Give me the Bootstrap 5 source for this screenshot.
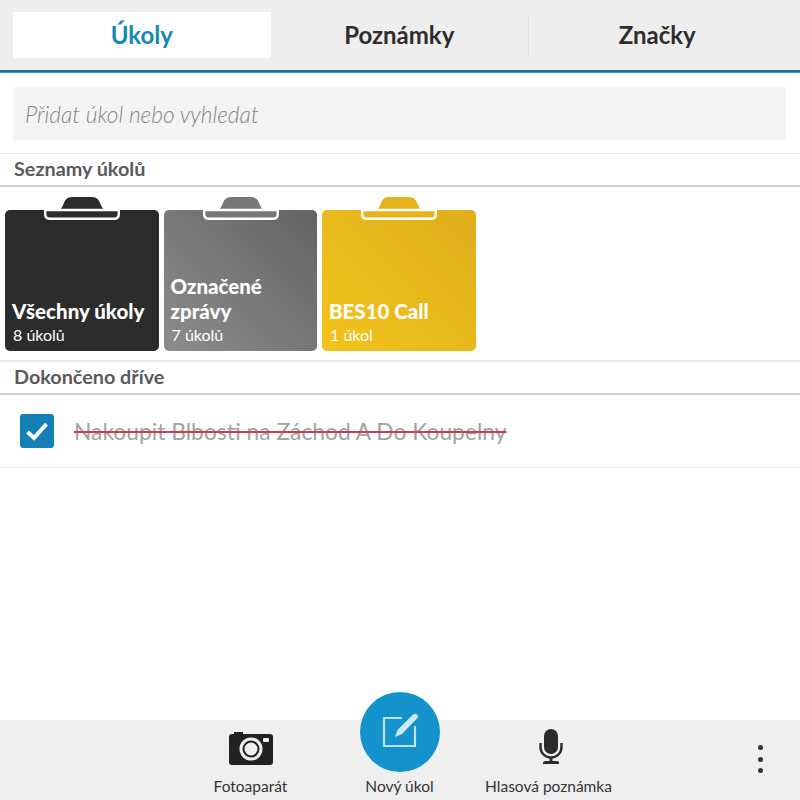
<!DOCTYPE html>
<html lang="cs">
<head>
    <meta charset="UTF-8">
    <meta name="viewport" content="width=device-width, initial-scale=1.0">
    <title>Úkoly</title>
    <link href="https://cdn.jsdelivr.net/npm/bootstrap@5.3.3/dist/css/bootstrap.min.css" rel="stylesheet">
    <style>
        body { font-family: Lato, "Open Sans", sans-serif; color: #333; background: #fff; }
        .tabbar { height: 72px; margin-bottom: 1px; padding: 12px 14px 12px 13px; background: #eee; border-bottom: 2px solid #1b6f93; box-shadow: 0 1px 0 #2a9fd0; }
        .tabbar .nav-link { height: 46px; padding: 0; display: flex; align-items: center; justify-content: center; font-size: 24px; font-weight: 700; color: #2d2d2d; border-radius: 0; }
        .tabbar .nav-item { width: 257.5px; }
        .tabbar .nav-item:last-child .nav-link { border-left: 1px solid #ddd; height: 40px; margin-top: 3px; }
        .tabbar .nav-link.active { background: #fff; color: #1487b8; }
        .search-wrap { padding: 14px 14px 13px 13px; }
        .search-box { height: 53px; padding: 2px 12px 0; background: #f4f4f4; border: 0; border-radius: 0; font-size: 22.7px; font-weight: 300; font-style: italic; }
        .search-box::placeholder { color: #858585; }
        .section-head { height: 34px; padding: 0 0 1px 14px; display: flex; align-items: center; font-size: 19.8px; font-weight: 700; color: #5a5a5a; border-top: 1px solid #e9e9e9; border-bottom: 2px solid #cfcfcf; }
        .lists { height: 174px; padding: 23px 0 0 5px; gap: 5px; border-bottom: 1px solid #e9e9e9; }
        .clipcard { position: relative; width: 153.5px; height: 141px; padding: 0 7px 6px; border-radius: 5px; color: #fff; display: flex; flex-direction: column; justify-content: flex-end; }
        .clipcard svg { position: absolute; left: 39px; top: -13px; }
        .clip-dark { background: #2c2c2c; }
        .clip-gray { background: linear-gradient(45deg, #8c8c8c, #636363); }
        .clip-yellow { background: linear-gradient(45deg, #f2c31b, #e1ae1c); }
        .clip-title { font-size: 20.5px; line-height: 25px; font-weight: 900; }
        .clip-sub { font-size: 16px; line-height: 21px; padding-left: 1px; }
        .list-group-item.done-row { height: 73px; padding: 0 0 0 20px; gap: 20px; border: 0; border-bottom: 1px solid #e9e9e9; border-radius: 0; }
        .done-box { width: 34px; height: 34px; background: #1480b8; border-radius: 3px; display: flex; align-items: center; justify-content: center; }
        .done-text { font-size: 22.8px; color: #a3a3a3; text-decoration: line-through; text-decoration-color: #c9404c; text-decoration-thickness: 2px; }
        .spacer-area { flex-grow: 1; }
        .actionbar { height: 80px; padding-left: 176px; background: #efefef; }
        .action-item { width: 149px; height: 80px; display: flex; flex-direction: column; align-items: center; justify-content: flex-end; padding-bottom: 2px; font-size: 15.5px; color: #333; }
        .action-icon { height: 44px; margin-bottom: 6px; display: flex; align-items: center; }
        .fab { width: 80px; height: 80px; margin-top: -27px; margin-bottom: 3px; padding: 0; border: 0; border-radius: 50%; background: #1492cc; display: flex; align-items: center; justify-content: center; flex-shrink: 0; }
        .dots { margin-left: auto; margin-right: 30px; width: 20px; padding-top: 25px; }
        .dots span { display: block; width: 5px; height: 5px; margin: 0 auto 6.5px; background: #333; border-radius: 50%; }
    </style>
</head>
<body>
    <div class="d-flex flex-column vh-100 overflow-hidden">
        <ul class="nav tabbar flex-shrink-0">
            <li class="nav-item"><a class="nav-link active" href="#">Úkoly</a></li>
            <li class="nav-item"><a class="nav-link" href="#">Poznámky</a></li>
            <li class="nav-item"><a class="nav-link" href="#">Značky</a></li>
        </ul>

        <div class="search-wrap">
            <input type="text" class="form-control search-box" placeholder="Přidat úkol nebo vyhledat">
        </div>

        <div class="section-head">Seznamy úkolů</div>
        <div class="d-flex lists">
            <div class="clipcard clip-dark">
                <svg width="76" height="24" viewBox="0 0 76 24"><path d="M12 14C17 14 18 10 20 6C22 1 24 0 30 0H46C52 0 54 1 56 6C58 10 59 14 64 14Z" fill="#2c2c2c"/><path d="M1.2 13V17Q1.2 21.8 6 21.8H70Q74.8 21.800 74.8 17V13Z" fill="#2c2c2c" stroke="#fff" stroke-width="2.4"/></svg>
                <div class="clip-title">Všechny úkoly</div>
                <div class="clip-sub">8 úkolů</div>
            </div>
            <div class="clipcard clip-gray">
                <svg width="76" height="24" viewBox="0 0 76 24"><path d="M12 14C17 14 18 10 20 6C22 1 24 0 30 0H46C52 0 54 1 56 6C58 10 59 14 64 14Z" fill="#777"/><path d="M1.2 13V17Q1.2 21.8 6 21.8H70Q74.8 21.800 74.8 17V13Z" fill="#777" stroke="#fff" stroke-width="2.4"/></svg>
                <div class="clip-title">Označené<br>zprávy</div>
                <div class="clip-sub">7 úkolů</div>
            </div>
            <div class="clipcard clip-yellow">
                <svg width="76" height="24" viewBox="0 0 76 24"><path d="M12 14C17 14 18 10 20 6C22 1 24 0 30 0H46C52 0 54 1 56 6C58 10 59 14 64 14Z" fill="#e6b31c"/><path d="M1.2 13V17Q1.2 21.8 6 21.8H70Q74.8 21.800 74.8 17V13Z" fill="#e6b31c" stroke="#fff" stroke-width="2.4"/></svg>
                <div class="clip-title">BES10 Call</div>
                <div class="clip-sub">1 úkol</div>
            </div>
        </div>

        <div class="section-head">Dokončeno dříve</div>
        <ul class="list-group">
            <li class="list-group-item d-flex align-items-center done-row">
                <span class="done-box">
                    <svg width="24" height="20" viewBox="0 0 24 20"><path d="M2.5 11L9 17L21.5 3" fill="none" stroke="#fff" stroke-width="4"/></svg>
                </span>
                <span class="done-text">Nakoupit Blbosti na Záchod A Do Koupelny</span>
            </li>
        </ul>

        <div class="spacer-area"></div>

        <div class="d-flex actionbar flex-shrink-0">
            <div class="action-item">
                <span class="action-icon">
                    <svg width="44" height="36" viewBox="0 0 44 36">
                        <path d="M5 3h9v2H5z" fill="#222"/>
                        <path d="M3 5H41Q44 5 44 8V33Q44 36 41 36H3Q0 36 0 33V8Q0 5 3 5Z" fill="#222"/>
                        <circle cx="22" cy="20" r="11.5" fill="#efefef"/>
                        <circle cx="22" cy="20" r="8.5" fill="#222"/>
                        <circle cx="22" cy="20" r="6.5" fill="#efefef"/>
                        <rect x="34" y="9" width="6" height="4" rx="1" fill="#efefef"/>
                    </svg>
                </span>
                Fotoaparát
            </div>
            <div class="action-item">
                <button type="button" class="btn fab">
                    <svg width="40" height="40" viewBox="0 0 40 40">
                        <path d="M22 6H4V34H35V14" fill="none" stroke="#bfe3f3" stroke-width="2.2"/>
                        <path d="M15 25L17.500 18L33 2.500Q35.500 1 37.500 3Q38.500 5 37 6.500L22 22Z" fill="#cfe9f6"/>
                    </svg>
                </button>
                Nový úkol
            </div>
            <div class="action-item">
                <span class="action-icon">
                    <svg width="28" height="36" viewBox="-4 0 28 36">
                        <rect x="5" y="0" width="14" height="25" rx="7" fill="#2b2b2b"/>
                        <path d="M1.5 14V18C1.5 24 6 28.5 12 28.5S22.500 24 22.500 18V14" fill="none" stroke="#2b2b2b" stroke-width="2.4"/>
                        <path d="M10.500 28h3v4h-3zM4 33.500Q4 32 6 32H18Q20 32 20 33.500V35H4Z" fill="#2b2b2b"/>
                    </svg>
                </span>
                Hlasová poznámka
            </div>
            <div class="dots"><span></span><span></span><span></span></div>
        </div>
    </div>
    <script src="https://cdn.jsdelivr.net/npm/bootstrap@5.3.3/dist/js/bootstrap.bundle.min.js"></script>
</body>
</html>
